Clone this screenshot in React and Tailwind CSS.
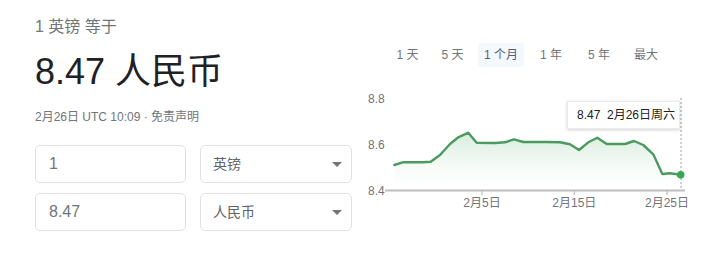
import React from "react";

const pts = [
  [394.3, 165], [402.7, 162.3], [423.3, 162.3], [430.7, 161.7], [440, 155], [450, 144],
  [458.3, 137.3], [468.3, 132.7], [476.7, 142.7], [495, 143], [505, 142.3], [514, 139.3],
  [523.3, 142], [546.7, 142], [560, 142.3], [570, 144.3], [579, 150], [588.3, 142.3],
  [597.3, 137.7], [606.7, 144], [625, 144], [634, 141], [643.3, 145], [653.3, 154.3],
  [662.3, 174], [670, 173.3], [680.7, 174.7],
];
const OX = 360;
const OY = 90;
const P = pts.map(([x, y]) => [x - OX, y - OY]);
const lineD = P.map(([x, y], i) => `${i ? "L" : "M"}${x.toFixed(1)} ${y.toFixed(1)}`).join(" ");
const areaD = `${lineD} L${P[P.length - 1][0].toFixed(1)} 100 L${P[0][0].toFixed(1)} 100 Z`;

function Chevron() {
  return (
    <svg width="10" height="5" viewBox="0 0 10 5" className="shrink-0">
      <path d="M0 0 L10 0 L5 5 Z" fill="#757575" />
    </svg>
  );
}

function Box({ children, w, select }) {
  return (
    <div
      className={`${w} shrink-0 h-[38px] rounded-[5px] border border-[#dfe1e5] flex items-center ${select ? "pl-[12px] pr-[9px] justify-between" : "pl-[13px]"}`}
    >
      {children}
    </div>
  );
}

export default function App() {
  const font = { fontFamily: '"Liberation Sans", Arial, "Noto Sans CJK SC", sans-serif' };
  const tabs = [
    { t: "1 天", w: "w-[45px]" },
    { t: "5 天", w: "w-[45px]" },
    { t: "1 个月", w: "w-[52px]", active: true },
    { t: "1 年", w: "w-[48px]" },
    { t: "5 年", w: "w-[48px]" },
    { t: "最大", w: "w-[46px]" },
  ];
  return (
    <div className="w-[721px] h-[266px] bg-white flex overflow-hidden" style={font}>
      <div className="w-[360px] shrink-0 pl-[35px] pt-[17px] flex flex-col">
        <div className="text-[16px] leading-[20px] text-[#70757a]">1 英镑 等于</div>
        <div className="mt-[13px] text-[36px] leading-[44px] text-[#202124] whitespace-nowrap">8.47 人民币</div>
        <div className="mt-[15px] text-[12px] leading-[16px] text-[#70757a] whitespace-nowrap">
          2月26日 UTC 10:09 · 免责声明
        </div>
        <div className="mt-[20px] flex flex-col gap-[10px]">
          <div className="flex gap-[14px]">
            <Box w="w-[151px]">
              <span className="text-[16px] text-[#70757a]">1</span>
            </Box>
            <Box w="w-[152px]" select>
              <span className="text-[14px] text-[#5f6368]">英镑</span>
              <Chevron />
            </Box>
          </div>
          <div className="flex gap-[14px]">
            <Box w="w-[151px]">
              <span className="text-[16px] text-[#70757a]">8.47</span>
            </Box>
            <Box w="w-[152px]" select>
              <span className="text-[14px] text-[#5f6368]">人民币</span>
              <Chevron />
            </Box>
          </div>
        </div>
      </div>

      <div className="w-[361px] shrink-0 flex flex-col">
        <div className="mt-[43px] ml-[25px] flex h-[24px]">
          {tabs.map((tb) => (
            <div key={tb.t} className={`${tb.w} flex justify-center`}>
              <div
                className={`h-[24px] leading-[24px] text-[12px] px-[6px] rounded-[2px] whitespace-nowrap ${tb.active ? "bg-[#f4f7fb] text-[#52627a]" : "text-[#70757a]"}`}
              >
                {tb.t}
              </div>
            </div>
          ))}
        </div>
        <div className="relative mt-[23px] w-[361px] h-[130px]">
          <svg width="361" height="130" viewBox="0 0 361 130" className="absolute left-0 top-0">
            <defs>
              <linearGradient id="fillg" x1="0" y1="0" x2="0" y2="1">
                <stop offset="0%" stopColor="#cfe9d6" stopOpacity="0.9" />
                <stop offset="100%" stopColor="#ffffff" stopOpacity="0.2" />
              </linearGradient>
            </defs>
            <path d={areaD} fill="url(#fillg)" />
            <text x="8" y="13" fontSize="12" fill="#70757a" style={font}>8.8</text>
            <text x="8" y="59" fontSize="12" fill="#70757a" style={font}>8.6</text>
            <text x="8" y="104.5" fontSize="12" fill="#70757a" style={font}>8.4</text>
            <line x1="321" y1="8" x2="321" y2="100" stroke="#9aa0a6" strokeWidth="1" strokeDasharray="2 2" />
            <line x1="25" y1="100.5" x2="325" y2="100.5" stroke="#bdbdbd" strokeWidth="2" />
            {[122, 214.3, 307].map((x) => (
              <line key={x} x1={x} y1="100" x2={x} y2="105" stroke="#bdbdbd" strokeWidth="1.2" />
            ))}
            <text x="122" y="116.5" fontSize="12" fill="#70757a" textAnchor="middle" style={font}>2月5日</text>
            <text x="214.3" y="116.5" fontSize="12" fill="#70757a" textAnchor="middle" style={font}>2月15日</text>
            <text x="307" y="116.5" fontSize="12" fill="#70757a" textAnchor="middle" style={font}>2月25日</text>
            <path d={lineD} fill="none" stroke="#4c9a5f" strokeWidth="2.4" strokeLinejoin="round" strokeLinecap="round" />
            <circle cx="320.7" cy="84.7" r="3.8" fill="#34a853" />
          </svg>
          <div className="absolute left-[207px] top-[11px] w-[113px] h-[28px] bg-white border border-[#e8eaed] shadow-[0_1px_3px_rgba(0,0,0,0.18)] flex items-center pl-[9px] text-[12px] text-[#202124] whitespace-nowrap">
            8.47&nbsp;&nbsp;2月26日周六
          </div>
        </div>
      </div>
    </div>
  );
}
